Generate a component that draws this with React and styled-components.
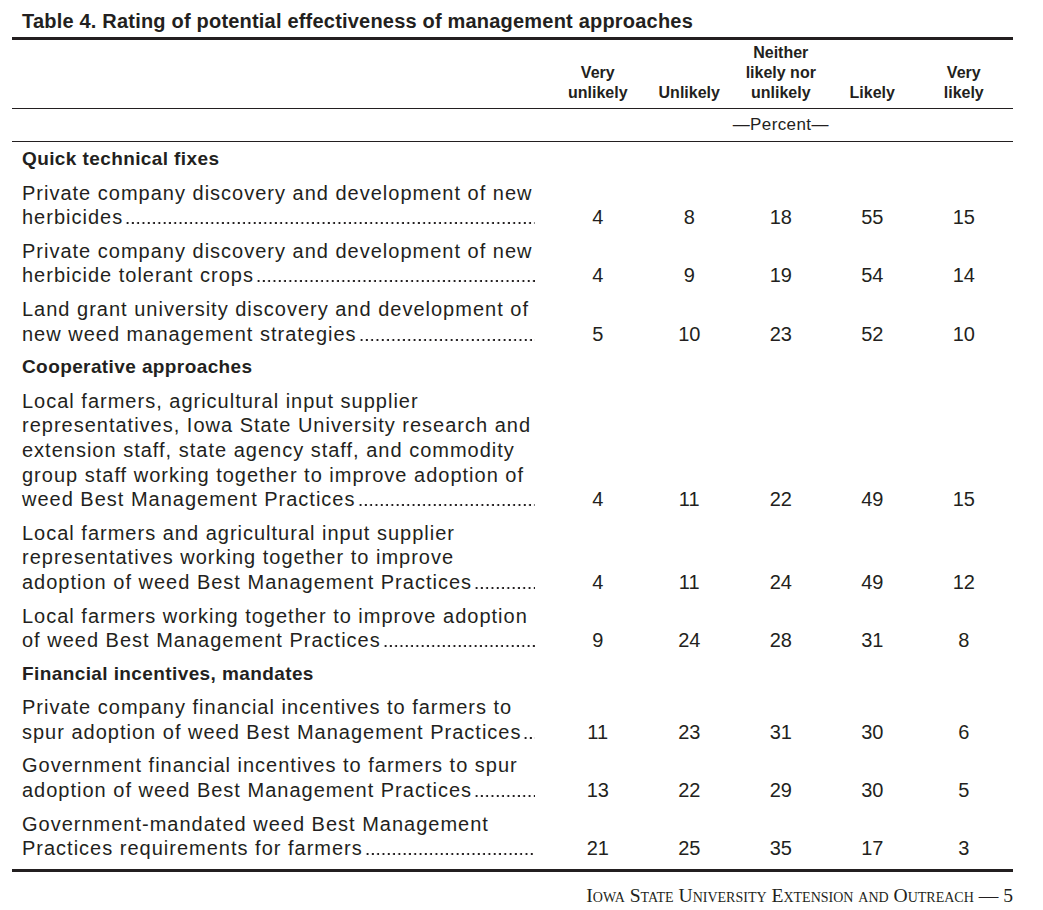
import styled, { createGlobalStyle } from "styled-components";

const GlobalStyle = createGlobalStyle`
  body {
    margin: 0;
    background: #ffffff;
    color: #231f20;
    font-family: "Liberation Sans", Arial, sans-serif;
  }
`;

const sections = [
  {
    title: "Quick technical fixes",
    rows: [
      { lines: ["Private company discovery and development of new", "herbicides"], values: [4, 8, 18, 55, 15] },
      { lines: ["Private company discovery and development of new", "herbicide tolerant crops "], values: [4, 9, 19, 54, 14] },
      { lines: ["Land grant university discovery and development of", "new weed management strategies "], values: [5, 10, 23, 52, 10] },
    ],
  },
  {
    title: "Cooperative approaches",
    rows: [
      {
        lines: [
          "Local farmers, agricultural input supplier",
          "representatives, Iowa State University research and",
          "extension staff, state agency staff, and commodity",
          "group staff working together to improve adoption of",
          "weed Best Management Practices ",
        ],
        values: [4, 11, 22, 49, 15],
      },
      {
        lines: [
          "Local farmers and agricultural input supplier",
          "representatives working together to improve",
          "adoption of weed Best Management Practices",
        ],
        values: [4, 11, 24, 49, 12],
      },
      { lines: ["Local farmers working together to improve adoption", "of weed Best Management Practices"], values: [9, 24, 28, 31, 8] },
    ],
  },
  {
    title: "Financial incentives, mandates",
    rows: [
      { lines: ["Private company financial incentives to farmers to", "spur adoption of weed Best Management Practices"], values: [11, 23, 31, 30, 6] },
      { lines: ["Government financial incentives to farmers to spur", "adoption of weed Best Management Practices"], values: [13, 22, 29, 30, 5] },
      { lines: ["Government-mandated weed Best Management", "Practices requirements for farmers"], values: [21, 25, 35, 17, 3] },
    ],
  },
];

const headings = [
  ["Very", "unlikely"],
  ["Unlikely"],
  ["Neither", "likely nor", "unlikely"],
  ["Likely"],
  ["Very", "likely"],
];

export default function App() {
  return (
    <Page>
      <GlobalStyle />
      <Title>Table 4. Rating of potential effectiveness of management approaches</Title>
      <Table>
        <HeadRow>
          <span />
          {headings.map((h, i) => (
            <HeadCell key={i}>
              {h.map((l) => (
                <div key={l}>{l}</div>
              ))}
            </HeadCell>
          ))}
        </HeadRow>
        <UnitRow>
          <span />
          <Unit>—Percent—</Unit>
        </UnitRow>
        <Body>
          {sections.map((s) => (
            <Section key={s.title}>
              <SectionTitle>{s.title}</SectionTitle>
              {s.rows.map((r, ri) => (
                <Row key={ri}>
                  <Label>
                    {r.lines.slice(0, -1).map((l) => (
                      <div key={l}>{l}</div>
                    ))}
                    <LastLine>
                      <span>{r.lines[r.lines.length - 1].trimEnd()}</span>
                      <Leader />
                    </LastLine>
                  </Label>
                  {r.values.map((v, vi) => (
                    <Value key={vi}>{v}</Value>
                  ))}
                </Row>
              ))}
            </Section>
          ))}
        </Body>
      </Table>
      <Footer>Iowa State University Extension and Outreach — 5</Footer>
    </Page>
  );
}

const Page = styled.div`
  width: 1001px;
  margin-left: 12px;
`;

const Title = styled.h1`
  margin: 0;
  padding: 9px 10px 4px;
  font-size: 20px;
  line-height: 24px;
  font-weight: 700;
  letter-spacing: 0.2px;
  border-bottom: 3px solid #231f20;
`;

const Table = styled.div`
  border-bottom: 3px solid #231f20;
`;

const grid = `
  display: grid;
  grid-template-columns: 540px repeat(5, 91.5px);
`;

const HeadRow = styled.div`
  ${grid}
  align-items: end;
  padding: 3px 0 5px;
  border-bottom: 1px solid #231f20;
`;

const HeadCell = styled.div`
  text-align: center;
  font-size: 16px;
  line-height: 20px;
  font-weight: 700;
`;

const UnitRow = styled.div`
  ${grid}
  height: 32px;
  align-items: center;
  border-bottom: 1px solid #231f20;
`;

const Unit = styled.div`
  grid-column: 2 / 7;
  text-align: center;
  font-size: 17px;
  letter-spacing: 0.4px;
`;

const Body = styled.div`
  display: flex;
  flex-direction: column;
  gap: 9px;
  padding: 5px 0 8px;
`;

const Section = styled.div`
  display: flex;
  flex-direction: column;
  gap: 9px;
`;

const SectionTitle = styled.h2`
  margin: 0;
  padding-left: 10px;
  font-size: 19px;
  line-height: 24.6px;
  font-weight: 700;
  letter-spacing: 0.4px;
`;

const Row = styled.div`
  ${grid}
  align-items: end;
  font-size: 20px;
  line-height: 24.6px;
`;

const Label = styled.div`
  padding: 0 17px 0 10px;
  letter-spacing: 1px;
  white-space: nowrap;
`;

const LastLine = styled.div`
  display: flex;
`;

const Leader = styled.span`
  flex: 1;
  margin-left: 2px;
  background-image: radial-gradient(circle at 2.6px 18px, #231f20 1.05px, transparent 1.45px);
  background-size: 5.3px 100%;
  background-repeat: repeat-x;
`;

const Value = styled.div`
  text-align: center;
`;

const Footer = styled.div`
  text-align: right;
  margin-top: 12px;
  font-family: "Liberation Serif", "Times New Roman", serif;
  font-variant: small-caps;
  font-size: 19.6px;
  line-height: 24px;
`;
